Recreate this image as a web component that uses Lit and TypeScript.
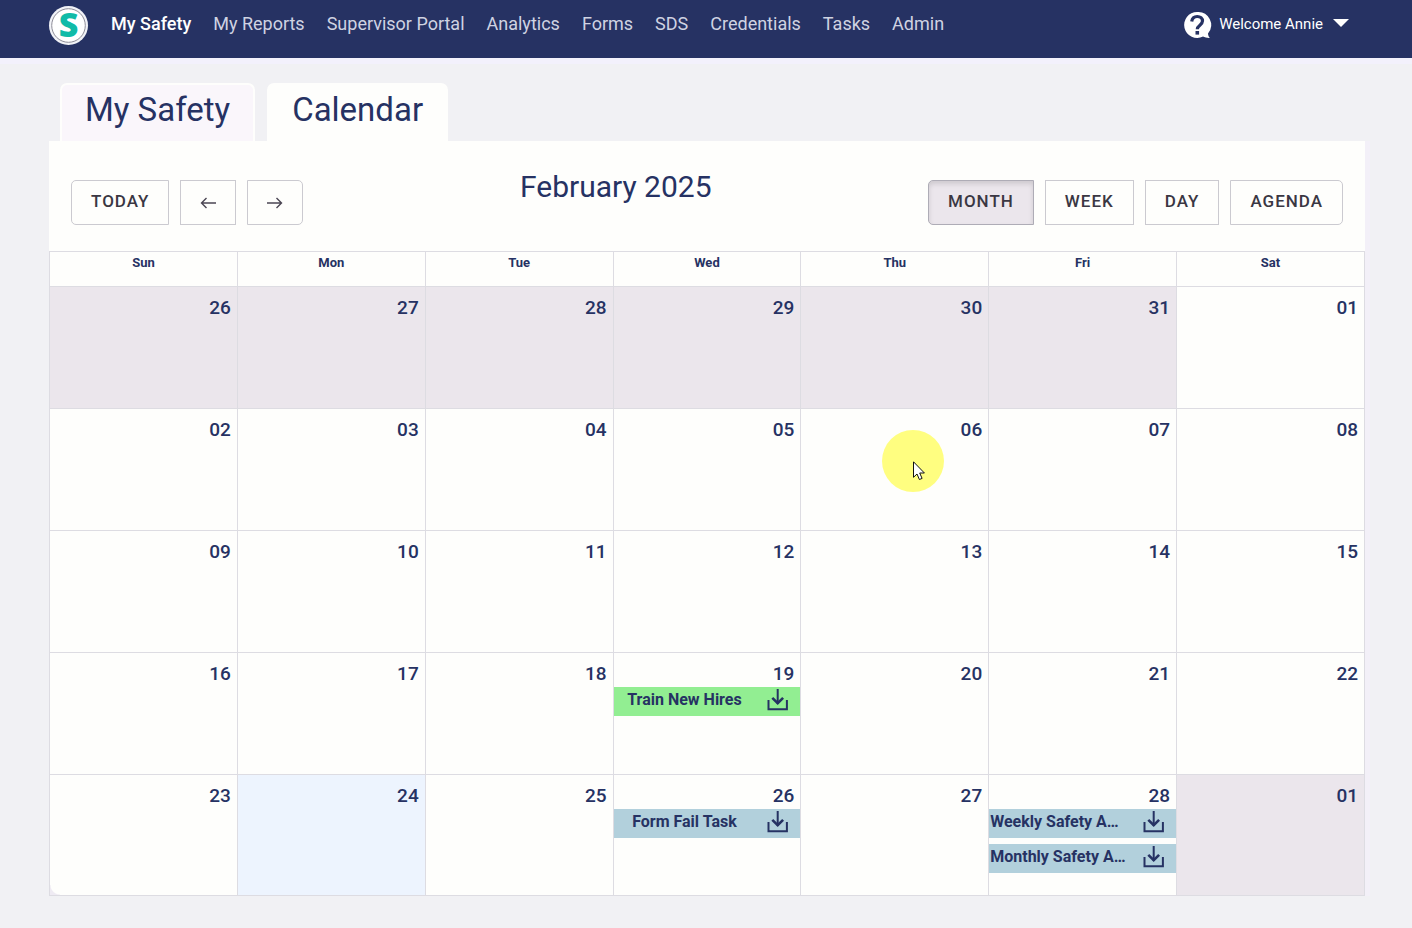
import { LitElement, html, css, nothing } from "lit";
import { customElement, state } from "lit/decorators.js";
import { classMap } from "lit/directives/class-map.js";

interface CalendarEvent {
  title: string;
  kind: "done" | "open";
  long?: boolean;
}

interface Day {
  label: string;
  off?: boolean;
  today?: boolean;
  pointer?: boolean;
  events?: CalendarEvent[];
}

const NAV = ["My Safety", "My Reports", "Supervisor Portal", "Analytics", "Forms", "SDS", "Credentials", "Tasks", "Admin"];
const VIEWS = ["Month", "Week", "Day", "Agenda"];
const WEEKDAYS = ["Sun", "Mon", "Tue", "Wed", "Thu", "Fri", "Sat"];

const EVENTS: Record<number, CalendarEvent[]> = {
  19: [{ title: "Train New Hires", kind: "done" }],
  26: [{ title: "Form Fail Task", kind: "open" }],
  28: [
    { title: "Weekly Safety A…", kind: "open", long: true },
    { title: "Monthly Safety A…", kind: "open", long: true },
  ],
};

function buildWeeks(): Day[][] {
  const days: Day[] = [];
  for (let d = 26; d <= 31; d++) days.push({ label: String(d), off: true });
  for (let d = 1; d <= 28; d++) {
    days.push({
      label: String(d).padStart(2, "0"),
      today: d === 24,
      pointer: d === 6,
      events: EVENTS[d],
    });
  }
  days.push({ label: "01", off: true });
  const weeks: Day[][] = [];
  for (let i = 0; i < days.length; i += 7) weeks.push(days.slice(i, i + 7));
  return weeks;
}

@customElement("top-bar")
export class TopBar extends LitElement {
  static styles = css`
    :host {
      display: block;
      background: #263263;
      border-bottom: 6px solid #f3f1fc;
    }
    .bar {
      display: flex;
      align-items: flex-start;
      justify-content: space-between;
      height: 58px;
      padding: 0 63px 0 48px;
      box-sizing: border-box;
    }
    .main {
      display: flex;
    }
    .logo {
      display: block;
      margin: 5px 22px 0 0;
    }
    .logo svg, .help svg, .caret {
      display: block;
      overflow: visible;
    }
    .letter {
      font-family: "Noto Sans", sans-serif;
      font-size: 34px;
      font-weight: 900;
      fill: #10bba8;
      text-anchor: middle;
    }
    .links {
      display: flex;
      gap: 22px;
      margin: 0;
      padding: 0;
      list-style: none;
    }
    .link {
      display: block;
      font-size: 18px;
      line-height: 48px;
      color: #cfd3e2;
      text-decoration: none;
      white-space: nowrap;
    }
    .link.active {
      color: #ffffff;
      font-weight: 500;
    }
    .user {
      display: flex;
      align-items: center;
      height: 50px;
      gap: 8px;
    }
    .help, .account {
      border: 0;
      padding: 0;
      background: none;
      color: #ffffff;
      font: inherit;
    }
    .account {
      display: flex;
      align-items: center;
      gap: 10px;
      padding-bottom: 2px;
      font-size: 15px;
      line-height: 48px;
      white-space: nowrap;
    }
  `;

  render() {
    return html`
      <header class="bar">
        <div class="main">
          <a class="logo" href="#" aria-label="Home">
            <svg width="41" height="41" viewBox="0 0 41 41">
              <circle cx="20.5" cy="20.5" r="19.5" fill="#f1f2f7" />
              <circle cx="20.5" cy="20.5" r="16.8" fill="#fff" stroke="#8e8d98" stroke-width="1" />
              <text class="letter" x="20.5" y="32">S</text>
            </svg>
          </a>
          <nav>
            <ul class="links">
              ${NAV.map(
                (n, i) => html`<li><a class=${classMap({ link: true, active: i === 0 })} href="#">${n}</a></li>`
              )}
            </ul>
          </nav>
        </div>
        <div class="user">
          <button class="help" type="button" aria-label="Help">
            <svg width="28" height="28" viewBox="0 0 28 28">
              <path d="M14 1a13 13 0 1 0 6 24.600c2 1 4.300 1.600 7 1.400-1.300-1.200-1.900-2.700-2-4.600A13 13 0 0 0 14 1z" fill="#fff" />
              <path d="M8.700 10.400c.5-3.100 2.400-4.900 5.500-4.900 3.200 0 5.300 1.900 5.300 4.600 0 4-5.200 4.100-5.200 8.100" fill="none" stroke="#263263" stroke-width="3.200" />
              <rect x="12.500" y="20" width="3.600" height="3.600" fill="#263263" />
            </svg>
          </button>
          <button class="account" type="button">
            Welcome Annie
            <svg class="caret" width="16" height="10" viewBox="0 0 16 10"><path d="M0 0h16L8 8z" fill="#fff" /></svg>
          </button>
        </div>
      </header>
    `;
  }
}

@customElement("month-grid")
export class MonthGrid extends LitElement {
  private weeks = buildWeeks();

  static styles = css`
    :host {
      display: block;
    }
    .grid {
      width: 100%;
      border-collapse: collapse;
      table-layout: fixed;
    }
    .weekday {
      height: 35px;
      padding: 0;
      box-sizing: border-box;
      border: 1px solid #dddce2;
      font-size: 13px;
      font-weight: 700;
      line-height: 22px;
      vertical-align: top;
    }
    .day {
      position: relative;
      height: 122px;
      padding: 0;
      box-sizing: border-box;
      border: 1px solid #dddce2;
      vertical-align: top;
    }
    .week:last-child .day {
      height: 121px;
    }
    .week:last-child .day:first-child {
      background: radial-gradient(circle at 100% 0, transparent 9px, #efebf3 10px) left bottom / 10px 10px no-repeat;
    }
    .day.off {
      background: #ebe6ec;
    }
    .day.today {
      background: #edf4fe;
    }
    .number {
      display: block;
      margin: 10px 0 2px auto;
      padding: 0 6px;
      border: 0;
      background: none;
      color: inherit;
      font: inherit;
      font-size: 19px;
      font-weight: 500;
      line-height: 22px;
    }
    .event {
      display: flex;
      align-items: flex-start;
      height: 29px;
      margin-bottom: 6px;
      padding-right: 11px;
    }
    .event.done {
      background: #92ee92;
    }
    .event.open {
      background: #b2d0dc;
    }
    .title, .download {
      border: 0;
      padding: 0;
      background: none;
      color: inherit;
      font: inherit;
    }
    .title {
      flex: 1;
      min-width: 0;
      margin-right: 12px;
      overflow: hidden;
      font-size: 16px;
      font-weight: 700;
      line-height: 26px;
      text-align: center;
      white-space: nowrap;
    }
    .title.long {
      padding-left: 1px;
      text-align: left;
    }
    .download svg {
      display: block;
    }
    .pointer {
      position: absolute;
      top: 21px;
      right: 44px;
      width: 62px;
      height: 62px;
      border-radius: 50%;
      background: #fffe80;
    }
    .pointer svg {
      position: absolute;
      left: 31px;
      top: 31px;
    }
  `;

  private renderEvent(e: CalendarEvent) {
    return html`
      <div class="event ${e.kind}">
        <button class=${classMap({ title: true, long: !!e.long })} type="button">${e.title}</button>
        <button class="download" type="button" aria-label="Download ${e.title}">
          <svg width="22" height="25" viewBox="0 0 22 25" fill="none" stroke="#263263" stroke-width="2">
            <path d="M1.500 13v9.300h18.400V13M10.700 2v15" />
            <path d="M5.300 10.800l5.400 5.400 5.400-5.400" stroke-width="2.600" />
          </svg>
        </button>
      </div>
    `;
  }

  render() {
    return html`
      <table class="grid">
        <thead>
          <tr>${WEEKDAYS.map((d) => html`<th class="weekday" scope="col">${d}</th>`)}</tr>
        </thead>
        <tbody>
          ${this.weeks.map(
            (week) => html`<tr class="week">
              ${week.map(
                (day) => html`<td class=${classMap({ day: true, off: !!day.off, today: !!day.today })}>
                  <button class="number" type="button">${day.label}</button>
                  ${(day.events ?? []).map((e) => this.renderEvent(e))}
                  ${day.pointer
                    ? html`<div class="pointer">
                        <svg width="13" height="20" viewBox="0 0 13 20">
                          <path d="M.5.800v15.500l3.500-3.300 2.400 5.500 2.700-1.100-2.400-5.400h4.700z" fill="#fff" stroke="#111" />
                        </svg>
                      </div>`
                    : nothing}
                </td>`
              )}
            </tr>`
          )}
        </tbody>
      </table>
    `;
  }
}

@customElement("app-root")
export class AppRoot extends LitElement {
  @state() private view = "Month";

  static styles = css`
    :host {
      display: block;
      min-height: 100vh;
      background: #f1f1f4;
      color: #263263;
      font-family: Roboto, "Noto Sans", sans-serif;
    }
    .page {
      padding: 19px 47px 32px 49px;
    }
    .tabs {
      display: flex;
      gap: 12px;
      padding-left: 11px;
    }
    .tab {
      height: 58px;
      padding: 0 23px 6px;
      box-sizing: border-box;
      border: 2px solid #fefefc;
      border-bottom: 0;
      border-radius: 7px 7px 0 0;
      background: #faf6fb;
      color: inherit;
      font: inherit;
      font-size: 33px;
      line-height: 50px;
    }
    .tab.active {
      background: #fefefc;
    }
    .panel {
      background: #fefefc;
      box-shadow: 5px 0 0 #f3f0f8;
    }
    .toolbar {
      display: flex;
      align-items: flex-start;
      padding: 39px 22px 26px;
    }
    .group {
      display: flex;
      gap: 11px;
    }
    .month {
      flex: 1;
      margin: 0;
      font-size: 30px;
      font-weight: 400;
      line-height: 14px;
      text-align: center;
    }
    .btn {
      display: flex;
      align-items: center;
      justify-content: center;
      height: 45px;
      padding: 0 19px 4px;
      box-sizing: border-box;
      border: 1px solid #cbcad0;
      background: #fefefc;
      color: #3a3743;
      font: inherit;
      font-size: 17px;
      font-weight: 500;
      letter-spacing: 1px;
      text-transform: uppercase;
    }
    .btn.arrow {
      width: 56px;
      padding: 0;
    }
    .btn:first-child {
      border-radius: 5px 0 0 5px;
    }
    .btn:last-child {
      border-radius: 0 5px 5px 0;
    }
    .btn.active {
      background: #ebe6ec;
      border-color: #aeacb6;
      box-shadow: inset 0 3px 5px rgba(0, 0, 0, 0.125);
    }
  `;

  render() {
    return html`
      <top-bar></top-bar>
      <main class="page">
        <div class="tabs" role="tablist">
          <button class="tab" type="button" role="tab" aria-selected="false">My Safety</button>
          <button class="tab active" type="button" role="tab" aria-selected="true">Calendar</button>
        </div>
        <section class="panel">
          <div class="toolbar">
            <div class="group">
              <button class="btn" type="button">Today</button>
              <button class="btn arrow" type="button" aria-label="Previous month">
                <svg width="16" height="12" viewBox="0 0 16 12" fill="none" stroke="#4b4653" stroke-width="1.400"><path d="M16 6H1.500M6.500 1l-5 5 5 5" /></svg>
              </button>
              <button class="btn arrow" type="button" aria-label="Next month">
                <svg width="16" height="12" viewBox="0 0 16 12" fill="none" stroke="#4b4653" stroke-width="1.400"><path d="M0 6h14.500M9.500 1l5 5-5 5" /></svg>
              </button>
            </div>
            <h1 class="month">February 2025</h1>
            <div class="group">
              ${VIEWS.map(
                (v) => html`<button
                  class=${classMap({ btn: true, active: v === this.view })}
                  type="button"
                  @click=${() => (this.view = v)}
                >${v}</button>`
              )}
            </div>
          </div>
          <month-grid></month-grid>
        </section>
      </main>
    `;
  }
}
